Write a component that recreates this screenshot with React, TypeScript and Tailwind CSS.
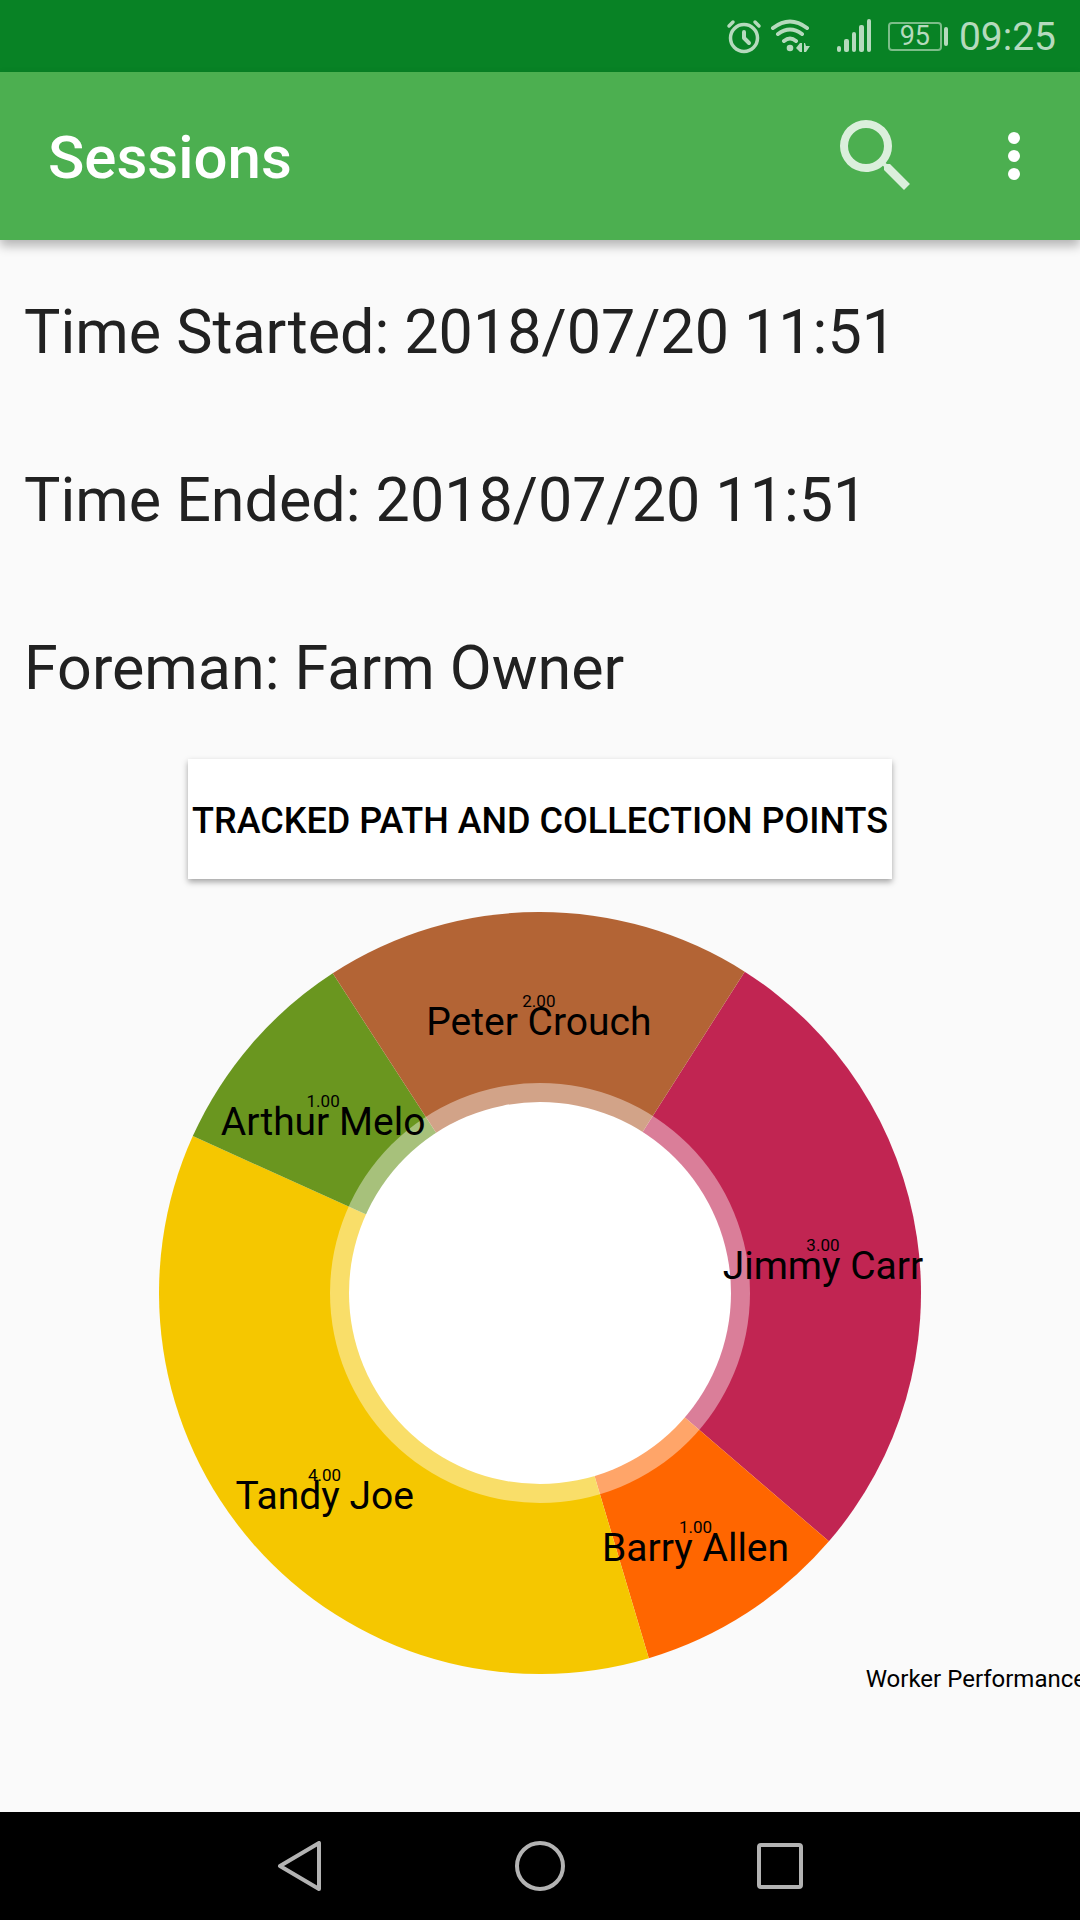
const slices = [
  { name: 'Jimmy Carr', value: 3, color: '#c12552' },
  { name: 'Barry Allen', value: 1, color: '#ff6600' },
  { name: 'Tandy Joe', value: 4, color: '#f5c700' },
  { name: 'Arthur Melo', value: 1, color: '#6a961f' },
  { name: 'Peter Crouch', value: 2, color: '#b36435' },
];

const START = -57.5;
const R = 381;

function point(deg: number, r: number) {
  const a = (deg * Math.PI) / 180;
  return { x: r * Math.cos(a), y: r * Math.sin(a) };
}

function Donut() {
  let from = START;
  const parts = slices.map((s) => {
    const sweep = (s.value / 11) * 360;
    const a = point(from, R);
    const b = point(from + sweep, R);
    const mid = point(from + sweep / 2, 286);
    from += sweep;
    return { ...s, mid, d: `M0 0L${a.x} ${a.y}A${R} ${R} 0 0 1 ${b.x} ${b.y}Z` };
  });
  return (
    <svg viewBox="-540 -382 1080 764" className="block w-full" role="img" aria-label="Worker performance chart">
      {parts.map((p) => <path key={p.name} d={p.d} fill={p.color} />)}
      <circle r="210" fill="#fff" fillOpacity=".41" />
      <circle r="191" fill="#fff" />
      {parts.map((p) => (
        <g key={p.name} textAnchor="middle" fill="#000">
          <text x={p.mid.x} y={p.mid.y} fontSize="17">{p.value.toFixed(2)}</text>
          <text x={p.mid.x} y={p.mid.y + 28} fontSize="39">{p.name}</text>
        </g>
      ))}
    </svg>
  );
}

function StatusBar() {
  return (
    <div className="flex h-[72px] items-center justify-end bg-[#088225] pr-6 text-[#b5dabd]">
      <svg className="mr-2 h-9 w-9" viewBox="0 0 36 36" fill="none" stroke="currentColor" strokeWidth="3.500" strokeLinecap="round">
        <circle cx="18" cy="20" r="13.500" />
        <path d="M18 14v6l5 5" strokeWidth="4" strokeLinejoin="round" />
        <path d="M3 8l4-4M33 8l-4-4" />
      </svg>
      <svg className="mr-[26px] h-9 w-10" viewBox="0 0 40 36" fill="none" stroke="currentColor" strokeWidth="4" strokeLinecap="round">
        <path d="M3 10Q20-3 37 10M8 16Q20 7 32 16M14 23Q20 18 26 23" />
        <circle cx="20" cy="30" r="3.300" fill="currentColor" stroke="none" />
        <path d="M26 30l4-5h2v9h-2zM34 25h1l1 3h4l-4 6h-2z" fill="currentColor" stroke="none" />
      </svg>
      <svg className="mr-4 h-9 w-9" viewBox="0 0 36 36" fill="currentColor">
        <rect x="1" y="28" width="4" height="6" rx="2" />
        <rect x="8" y="21" width="5" height="13" rx="2" />
        <rect x="16" y="14" width="4" height="20" rx="2" />
        <rect x="23" y="7" width="5" height="27" rx="2" />
        <rect x="31" y="1" width="4" height="33" rx="2" />
      </svg>
      <div className="flex h-[29px] w-[54px] items-center justify-center rounded border-2 border-[#7cbd89] text-[27px]">95</div>
      <div className="mr-[11px] ml-[2px] h-[19px] w-1 rounded-full bg-current" />
      <span className="pt-[3px] text-[39px]">09:25</span>
    </div>
  );
}

const navIcon = 'h-[50px] w-[50px]';

export default function App() {
  return (
    <div className="flex min-h-screen flex-col overflow-x-hidden bg-[#fafafa] font-[Roboto,sans-serif]">
      <StatusBar />
      <header className="flex h-[168px] items-center bg-[#4caf50] pr-9 pl-12 text-white shadow-[0_6px_10px_rgba(0,0,0,0.28)]">
        <h1 className="flex-1 pt-1 text-[60px] font-medium">Sessions</h1>
        <button aria-label="Search" className="mr-15"><svg className="h-24 w-24" viewBox="0 0 24 24" fill="currentColor" fillOpacity=".8"><path d="M15.5 14h-.79l-.28-.27A6.47 6.47 0 0 0 16 9.500 6.500 6.500 0 1 0 9.500 16c1.610 0 3.090-.59 4.230-1.570l.27.28v.79l5 4.990L20.490 19zm-6 0a4.500 4.500 0 1 1 0-9 4.500 4.500 0 0 1 0 9z" /></svg></button>
        <button aria-label="More options"><svg className="h-15 w-15" viewBox="0 0 60 60" fill="currentColor"><circle cx="30" cy="12" r="6" /><circle cx="30" cy="30" r="6" /><circle cx="30" cy="48" r="6" /></svg></button>
      </header>
      <main className="flex flex-1 flex-col">
        <div className="flex flex-col pt-2 pl-6 text-[61px] text-[#212121]">
          <p className="h-[168px] leading-[168px]">Time Started: 2018/07/20 11:51</p>
          <p className="h-[168px] leading-[168px]">Time Ended: 2018/07/20 11:51</p>
          <p className="h-[168px] leading-[168px]">Foreman: Farm Owner</p>
        </div>
        <button className="mt-[7px] h-[120px] self-center bg-white px-1 pt-1 text-[36px] font-medium whitespace-nowrap text-black shadow-[0_3px_6px_rgba(0,0,0,0.35)]">TRACKED PATH AND COLLECTION POINTS</button>
        <div className="mt-8"><Donut /></div>
        <p className="-mt-3.5 -mr-1.5 self-end text-[24px] text-black">Worker Performance</p>
      </main>
      <nav className="flex h-[108px] items-center justify-center gap-[190px] bg-black text-[#b3b3b3]">
        <button aria-label="Back"><svg className={navIcon} viewBox="0 0 50 50" fill="none" stroke="currentColor" strokeWidth="4" strokeLinejoin="round"><path d="M44 2v46L5 25z" /></svg></button>
        <button aria-label="Home"><svg className={navIcon} viewBox="0 0 50 50" fill="none" stroke="currentColor" strokeWidth="4"><circle cx="25" cy="25" r="23" /></svg></button>
        <button aria-label="Recent apps"><svg className={navIcon} viewBox="0 0 50 50" fill="none" stroke="currentColor" strokeWidth="4"><rect x="4" y="4" width="42" height="42" rx="2" /></svg></button>
      </nav>
    </div>
  );
}
